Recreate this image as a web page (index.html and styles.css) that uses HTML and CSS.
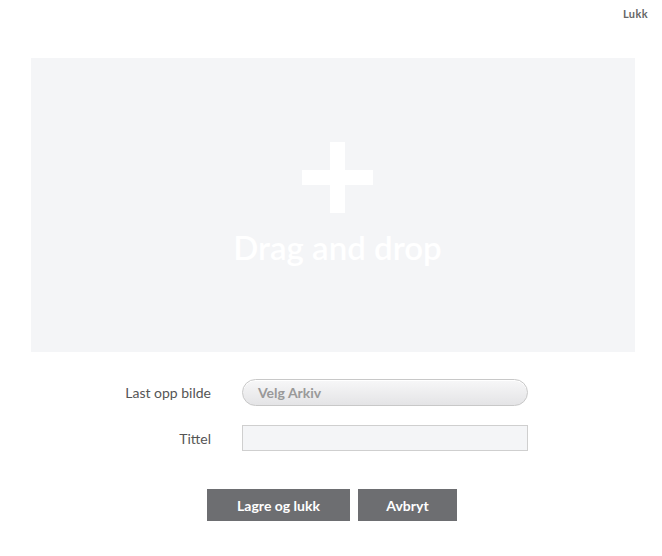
FILE: index.html
```html
<!DOCTYPE html>
<html lang="no">
<head>
    <meta charset="UTF-8">
    <meta name="viewport" content="width=device-width, initial-scale=1.0">
    <title>Last opp bilde</title>
    <link rel="stylesheet" href="styles.css">
</head>
<body>
    <div class="top-bar">
        <a href="#" class="close-link">Lukk</a>
    </div>

    <div class="dropzone">
        <div class="plus">
            <span class="plus-v"></span>
            <span class="plus-h"></span>
        </div>
        <div class="dropzone-text">Drag and drop</div>
    </div>

    <form class="upload-form">
        <label class="form-label" for="file">Last opp bilde</label>
        <button type="button" class="file-button" id="file">Velg Arkiv</button>

        <label class="form-label" for="title">Tittel</label>
        <input type="text" class="title-input" id="title" name="title">
    </form>

    <div class="actions">
        <button type="submit" class="action-button save">Lagre og lukk</button>
        <button type="button" class="action-button cancel">Avbryt</button>
    </div>
</body>
</html>
```

FILE: styles.css
```css
body {
    font-family: 'Lato', 'Liberation Sans', sans-serif;
    background-color: #ffffff;
    margin: 0;
    padding: 0;
    width: 662px;
    height: 556px;
    overflow: hidden;
}
.top-bar {
    display: flex;
    justify-content: flex-end;
    height: 58px;
    box-sizing: border-box;
    padding: 7px 14px 0 0;
}
.close-link {
    color: #666;
    font-size: 11px;
    font-weight: 700;
    text-decoration: none;
    letter-spacing: 0.4px;
}
.dropzone {
    margin-left: 31px;
    width: 604px;
    height: 294px;
    background-color: #f4f5f7;
    display: flex;
    flex-direction: column;
    align-items: center;
    box-sizing: border-box;
    padding: 84px 0 0 9px;
}
.plus {
    position: relative;
    width: 71px;
    height: 71px;
}
.plus-v,
.plus-h {
    position: absolute;
    background-color: #ffffff;
}
.plus-v {
    left: 28px;
    top: 0;
    width: 15px;
    height: 71px;
}
.plus-h {
    left: 0;
    top: 28px;
    width: 71px;
    height: 15px;
}
.dropzone-text {
    margin-top: 14px;
    color: #ffffff;
    font-size: 33px;
    font-weight: 600;
    line-height: 40px;
}
.upload-form {
    display: grid;
    grid-template-columns: 211px 286px;
    column-gap: 31px;
    row-gap: 19px;
    align-items: center;
    margin-top: 27px;
}
.form-label {
    text-align: right;
    color: #555;
    font-size: 14px;
}
.file-button {
    height: 27px;
    border: 1px solid #c8c8c8;
    border-radius: 14px;
    background: linear-gradient(to bottom, #f7f7f8, #e4e4e6);
    color: #999;
    font-family: inherit;
    font-size: 14px;
    font-weight: 700;
    text-align: left;
    padding: 0 0 0 15px;
    box-shadow: inset 0 1px 0 #ffffff;
}
.title-input {
    height: 26px;
    box-sizing: border-box;
    border: 1px solid #cfcfcf;
    background-color: #f4f5f7;
    font-family: inherit;
    font-size: 14px;
    padding: 0 8px;
}
.actions {
    display: flex;
    gap: 8px;
    margin-top: 38px;
    padding-left: 207px;
}
.action-button {
    height: 32px;
    border: none;
    background-color: #6d6e71;
    color: #ffffff;
    font-family: inherit;
    font-size: 14px;
    font-weight: 700;
    cursor: pointer;
}
.save {
    width: 143px;
}
.cancel {
    width: 99px;
}
```
